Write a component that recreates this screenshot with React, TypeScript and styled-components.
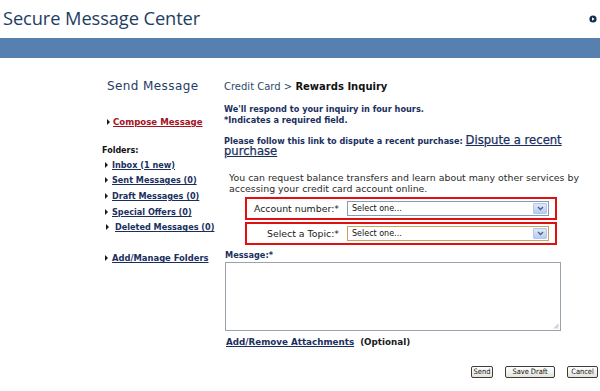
import { createGlobalStyle, styled } from "styled-components";

const GlobalStyle = createGlobalStyle`
  body {
    margin: 0;
    background: #ffffff;
    font-family: "DejaVu Sans", Verdana, sans-serif;
  }
`;

const Page = styled.div`
  width: 600px;
  height: 391px;
  overflow: hidden;
`;

const Header = styled.div`
  height: 38px;
  display: flex;
  align-items: center;
  justify-content: space-between;
  padding: 0 3px 0 3px;
  box-sizing: border-box;
`;

const Title = styled.h1`
  margin: 0;
  font-family: "Open Sans", sans-serif;
  font-weight: 400;
  font-size: 18.3px;
  color: #1d3d63;
  letter-spacing: -0.1px;
  margin-top: -4px;
`;

const HeaderIcon = styled.svg`
  width: 8px;
  height: 8px;
`;

const Bar = styled.div`
  height: 20px;
  background: #5580b0;
`;

const Content = styled.div`
  display: grid;
  grid-template-columns: 122px 376px;
  padding-left: 102px;
  padding-top: 21px;
`;

const Side = styled.div`
  display: flex;
  flex-direction: column;
`;

const SideTitle = styled.div`
  font-size: 12px;
  color: #1d3d63;
  letter-spacing: 0.4px;
  padding-left: 5px;
  height: 18px;
  line-height: 14px;
`;

const NavItem = styled.div<{ $indent: number; $gap: number; $top?: number }>`
  display: flex;
  align-items: center;
  height: 15.7px;
  margin-top: ${(p) => p.$top ?? 0}px;
  padding-left: ${(p) => p.$indent}px;
  gap: ${(p) => p.$gap}px;
`;

const Marker = styled.span`
  width: 0;
  height: 0;
  border-top: 3px solid transparent;
  border-bottom: 3px solid transparent;
  border-left: 3px solid #1a1a1a;
`;

const NavLink = styled.a<{ $red?: boolean; $size?: number }>`
  font-size: ${(p) => p.$size ?? 8.15}px;
  font-weight: 700;
  color: ${(p) => (p.$red ? "#a3121f" : "#1a2f5e")};
  text-decoration: underline;
  white-space: nowrap;
`;

const FoldersLabel = styled.div`
  font-size: 8px;
  font-weight: 700;
  color: #111;
  margin-top: 14px;
  height: 13px;
  line-height: 13px;
`;

const Main = styled.div`
  display: flex;
  flex-direction: column;
`;

const Crumb = styled.div`
  font-size: 10px;
  color: #2c4a6b;
  height: 17px;
  line-height: 16px;
  b {
    color: #111;
  }
`;

const Note = styled.div`
  font-size: 8.2px;
  font-weight: 700;
  color: #1a2f5e;
  line-height: 11px;
`;

const NoteBlock = styled.div`
  margin-top: 8px;
`;

const BigLink = styled.a`
  font-size: 11.6px;
  line-height: 9px;
  color: #1a2f5e;
  text-decoration: underline;
  font-weight: 400;
  -webkit-text-stroke: 0.25px #1a2f5e;
`;

const DisputeText = styled.div`
  font-size: 8.15px;
  font-weight: 700;
  color: #1a2f5e;
  line-height: 11px;
  margin-top: 10px;
`;

const Info = styled.div`
  font-size: 9.4px;
  color: #2a2a2a;
  line-height: 10.8px;
  margin-top: 15px;
  padding-left: 5px;
  white-space: nowrap;
`;

const FieldBox = styled.div<{ $top: number }>`
  margin-top: ${(p) => p.$top}px;
  margin-left: 21px;
  width: 312px;
  height: 23px;
  border: 2px solid #e01010;
  box-sizing: border-box;
  display: flex;
  align-items: center;
`;

const FieldLabel = styled.label`
  width: 100px;
  text-align: right;
  font-size: 9.4px;
  color: #1a1a1a;
  padding-right: 8px;
  box-sizing: border-box;
  white-space: nowrap;
`;

const FakeSelect = styled.div<{ $focus?: boolean }>`
  width: 202px;
  height: 15px;
  box-sizing: border-box;
  border: 1px solid ${(p) => (p.$focus ? "#c9a25e" : "#7f9db9")};
  display: flex;
  align-items: center;
  justify-content: space-between;
  padding-left: 4px;
  font-family: "DejaVu Sans", sans-serif;
  font-size: 8px;
  color: #111;
  background: #fff;
`;

const SelectArrow = styled.span`
  width: 14px;
  height: 11px;
  margin-right: 1px;
  background: linear-gradient(#dfe8f8, #b9cdf2);
  border: 1px solid #b4c6ec;
  box-sizing: border-box;
  border-radius: 1px;
  display: flex;
  align-items: center;
  justify-content: center;
`;

const MessageLabel = styled.div`
  font-size: 8.2px;
  font-weight: 700;
  color: #1a2f5e;
  margin-top: 5px;
  padding-left: 1px;
  height: 10px;
  line-height: 10px;
`;

const TextArea = styled.div`
  margin-top: 2px;
  margin-left: 1px;
  width: 336px;
  height: 69px;
  border: 1px solid #9aa3ad;
  box-sizing: border-box;
  position: relative;
`;

const Grip = styled.svg`
  position: absolute;
  right: 1px;
  bottom: 1px;
  width: 6px;
  height: 6px;
`;

const Attach = styled.div`
  margin-top: 6px;
  padding-left: 2px;
  font-size: 8.75px;
  line-height: 11px;
  font-weight: 700;
  color: #1a1a1a;
  display: flex;
  gap: 6px;
  a {
    color: #1a2f5e;
    text-decoration: underline;
  }
`;

const Buttons = styled.div`
  margin-top: 18px;
  display: flex;
  justify-content: flex-end;
  gap: 12px;
  margin-right: 2px;
`;

const Button = styled.button<{ $w: number }>`
  width: ${(p) => p.$w}px;
  height: 12px;
  padding: 0;
  border: 1px solid #3c3c3c;
  border-radius: 2px;
  background: linear-gradient(#ffffff, #e4e4dc);
  font-family: "DejaVu Sans Condensed", "DejaVu Sans", sans-serif;
  font-size: 7.4px;
  color: #111;
  line-height: 10px;
`;

const Chevron = () => (
  <svg width="7" height="5" viewBox="0 0 7 5">
    <path d="M1 1 L3.5 3.5 L6 1" fill="none" stroke="#4d6185" strokeWidth="1.4" />
  </svg>
);

const folders = [
  { label: "Inbox (1 new)", indent: 3, gap: 4 },
  { label: "Sent Messages (0)", indent: 3, gap: 4 },
  { label: "Draft Messages (0)", indent: 3, gap: 4 },
  { label: "Special Offers (0)", indent: 3, gap: 4 },
  { label: "Deleted Messages (0)", indent: 4, gap: 6 },
];

export default function App() {
  return (
    <Page>
      <GlobalStyle />
      <Header>
        <Title>Secure Message Center</Title>
        <HeaderIcon viewBox="0 0 8 8">
          <circle cx="4" cy="4" r="3.6" fill="#132c52" />
          <path d="M3 2.2 L5.6 4 L3 5.8 Z" fill="#ffffff" />
        </HeaderIcon>
      </Header>
      <Bar />
      <Content>
        <Side>
          <SideTitle>Send Message</SideTitle>
          <NavItem $indent={5} $gap={3} $top={17}>
            <Marker />
            <NavLink $red $size={8.6}>Compose Message</NavLink>
          </NavItem>
          <FoldersLabel>Folders:</FoldersLabel>
          {folders.map((f) => (
            <NavItem key={f.label} $indent={f.indent} $gap={f.gap}>
              <Marker />
              <NavLink>{f.label}</NavLink>
            </NavItem>
          ))}
          <NavItem $indent={3} $gap={4} $top={15.5}>
            <Marker />
            <NavLink $size={8.4}>Add/Manage Folders</NavLink>
          </NavItem>
        </Side>
        <Main>
          <Crumb>
            Credit Card &gt; <b>Rewards Inquiry</b>
          </Crumb>
          <NoteBlock>
            <Note>We'll respond to your inquiry in four hours.</Note>
            <Note>*Indicates a required field.</Note>
          </NoteBlock>
          <DisputeText>
            Please follow this link to dispute a recent purchase:{" "}
            <BigLink>Dispute a recent purchase</BigLink>
          </DisputeText>
          <Info>
            You can request balance transfers and learn about many other services by
            <br />
            accessing your credit card account online.
          </Info>
          <FieldBox $top={2}>
            <FieldLabel>Account number:*</FieldLabel>
            <FakeSelect>
              Select one...
              <SelectArrow>
                <Chevron />
              </SelectArrow>
            </FakeSelect>
          </FieldBox>
          <FieldBox $top={2}>
            <FieldLabel>Select a Topic:*</FieldLabel>
            <FakeSelect $focus>
              Select one...
              <SelectArrow>
                <Chevron />
              </SelectArrow>
            </FakeSelect>
          </FieldBox>
          <MessageLabel>Message:*</MessageLabel>
          <TextArea>
            <Grip viewBox="0 0 6 6">
              <path d="M5.5 1 L1 5.5 M5.5 3 L3 5.5 M5.5 5 L5 5.5" stroke="#9a9a9a" strokeWidth="0.8" />
            </Grip>
          </TextArea>
          <Attach>
            <a>Add/Remove Attachments</a>
            <span>(Optional)</span>
          </Attach>
          <Buttons>
            <Button $w={22}>Send</Button>
            <Button $w={50}>Save Draft</Button>
            <Button $w={31}>Cancel</Button>
          </Buttons>
        </Main>
      </Content>
    </Page>
  );
}
